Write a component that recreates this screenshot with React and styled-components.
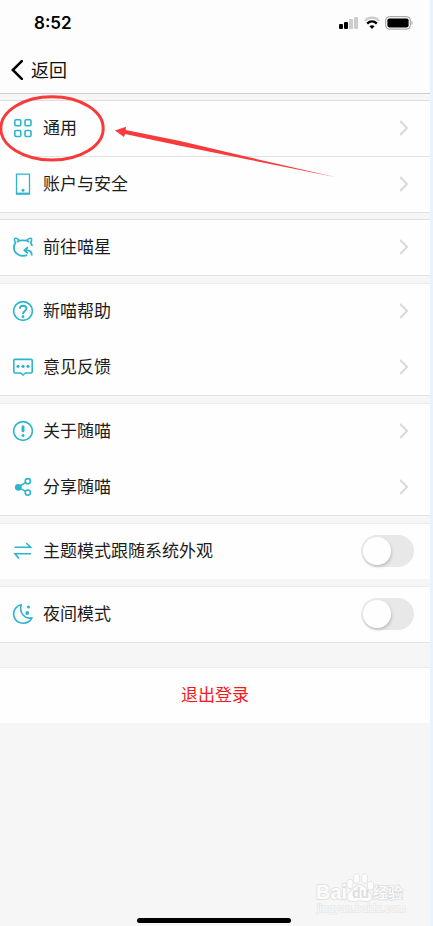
import React from 'react';
import styled, { createGlobalStyle } from 'styled-components';

const sans = '"Liberation Sans", "Noto Sans CJK SC", sans-serif';
const teal = '#2cb5cb';

const GlobalStyle = createGlobalStyle`
  *, *::before, *::after { box-sizing: border-box; }
  body { margin: 0; background: #f6f6f6; font-family: ${sans}; color: #1c1c1c; }
  button { font: inherit; color: inherit; border: 0; background: none; padding: 0; margin: 0; }
`;

const Screen = styled.div`
  position: relative;
  display: flex;
  flex-direction: column;
  min-height: 100vh;
  overflow: hidden;
  background: #f6f6f6;
  border-right: 3px solid #eaf2fd;
`;

const Header = styled.header`
  background: #fdfdfd;
  border-bottom: 1px solid #ccc;
`;

const StatusBar = styled.div`
  display: flex;
  align-items: center;
  justify-content: space-between;
  height: 46px;
  padding: 0 17px 0 34px;
`;

const Clock = styled.time`
  font: 600 17px/20px Inter, sans-serif;
  color: #000;
`;

const StatusIcons = styled.div`
  display: flex;
  align-items: center;
  gap: 5px;
`;

const NavBar = styled.nav`
  display: flex;
  align-items: center;
  height: 47px;
  padding: 0 11px;
`;

const BackButton = styled.button`
  display: flex;
  align-items: center;
  gap: 8px;
  font-size: 18px;
  line-height: 26px;
  color: #111;
  cursor: pointer;
`;

const BackText = styled.span`
  padding-top: 2px;
`;

const Main = styled.main`
  display: flex;
  flex-direction: column;
  padding-top: 6px;
`;

const Group = styled.section`
  background: #fefefe;
  border-top: 1px solid ${(p) => (p.$strong ? '#dedede' : '#ececec')};
  border-bottom: ${(p) => (p.$open ? '0' : '1px solid #e2e2e2')};
  margin-bottom: ${(p) => p.$gap || 7}px;
`;

const rowLayout = `
  display: flex;
  align-items: center;
  width: 100%;
  height: 55px;
  padding: 0 16px 1px 12px;
  gap: 9px;
  font-size: 17px;
  line-height: 24px;
  text-align: left;
`;

const RowButton = styled.button`
  ${rowLayout}
  && { padding: 0 21px 1px 12px; }
  cursor: pointer;
`;

const RowLabel = styled.label`
  ${rowLayout}
`;

const Divider = styled.hr`
  height: 1px;
  margin: 0 0 0 20px;
  border: 0;
  background: ${(p) => (p.$faint ? 'transparent' : '#e2e2e2')};
`;

const RowText = styled.span`
  flex: 1;
  padding-top: 2px;
`;

const IconSvg = styled.svg`
  flex: none;
  width: 22px;
  height: 22px;
  fill: none;
  stroke: ${teal};
  stroke-width: 1.6;
  overflow: visible;
`;

const Switch = styled.input`
  appearance: none;
  display: flex;
  align-items: center;
  flex: none;
  width: 53px;
  height: 32px;
  margin: 0;
  padding: 0 2px;
  border-radius: 16px;
  background: #e8e8e8;
  cursor: pointer;

  &::before {
    content: '';
    width: 28px;
    height: 28px;
    border-radius: 50%;
    background: #fefefe;
    box-shadow: 1px 2px 3px rgba(0, 0, 0, 0.16);
  }
  &:checked { background: ${teal}; justify-content: flex-end; }
`;

const LogoutPanel = styled.section`
  margin-top: 17px;
  background: #fefefe;
  border-top: 1px solid #ececec;
`;

const LogoutButton = styled.button`
  display: block;
  width: 100%;
  height: 55px;
  && { color: #f5191d; }
  font-size: 17px;
  line-height: 24px;
  cursor: pointer;
`;

const Footer = styled.footer`
  display: flex;
  justify-content: center;
  margin-top: auto;
  padding: 0 2px 3px 0;
`;

const HomeIndicator = styled.div`
  width: 154px;
  height: 5px;
  border-radius: 3px;
  background: #000;
`;

const Annotation = styled.svg`
  position: absolute;
  top: 0;
  left: 0;
  width: 345px;
  height: 190px;
  pointer-events: none;
`;

const Watermark = styled.svg`
  position: absolute;
  right: 20px;
  bottom: 8px;
  width: 100px;
  height: 48px;
  pointer-events: none;
`;

const icons = {
  grid: (
    <g>
      <rect x="2.8" y="2.8" width="6" height="6" rx="1.2" />
      <rect x="13" y="2.8" width="6" height="6" rx="1.2" />
      <rect x="2.8" y="13.5" width="6" height="6" rx="1.2" />
      <rect x="13" y="13.5" width="6" height="6" rx="1.2" />
    </g>
  ),
  phone: (
    <g>
      <path d="M4.5 1.2H17.5V20.8H4.5Z" strokeWidth="1.3" />
      <path d="M4 20.6H18" strokeWidth="2" />
      <circle cx="11" cy="17.3" r="1.5" fill={teal} stroke="none" />
    </g>
  ),
  cat: (
    <g>
      <path d="M15.2 19.2C8.500 21.6 1.900 17.600 1.900 11.800C1.900 9.500 2.600 7.800 3.800 6.300M6.800 4.600C9.500 4.200 12.500 4.200 15.200 4.600M18.300 6.300C19.300 7.500 19.900 8.700 20 10" strokeWidth="1.8" />
      <path d="M3.600 6.800C2.200 4.600 2 2.700 3.300 2.300C4.700 2 6.200 3 7.200 4.500L5 6M18.500 6.800C19.900 4.600 20.100 2.700 18.800 2.300C17.400 2 15.900 3 14.900 4.500L17 6" strokeWidth="1.6" strokeLinejoin="round" />
      <path d="M15.900 11.300L12.400 14.300L15.900 17.400M12.800 14.300H15.200C18.200 14.300 19.800 16 19.800 19.400" strokeWidth="1.8" />
    </g>
  ),
  help: (
    <g>
      <circle cx="11" cy="11" r="9.4" />
      <path d="M7.8 8.8C7.8 6.7 9.2 5.7 11.1 5.7C13 5.7 14.4 6.9 14.4 8.6C14.4 10.8 11 11.2 11 14" strokeWidth="1.9" />
      <circle cx="11" cy="16.7" r="1.4" fill={teal} stroke="none" />
    </g>
  ),
  feedback: (
    <g>
      <path d="M3 3.4H19C19.8 3.4 20.2 3.8 20.2 4.6V15.8C20.2 16.6 19.8 17 19 17H13.4L11 19L8.6 17H3C2.2 17 1.8 16.6 1.8 15.8V4.6C1.8 3.8 2.2 3.4 3 3.4Z" />
      <g fill={teal} stroke="none">
        <circle cx="6" cy="10.3" r="1.6" />
        <circle cx="11" cy="10.3" r="1.6" />
        <circle cx="16" cy="10.3" r="1.6" />
      </g>
    </g>
  ),
  about: (
    <g>
      <circle cx="11" cy="11" r="9.4" />
      <path d="M11 6.8V10.8" strokeWidth="3" strokeLinecap="round" />
      <circle cx="11" cy="15.6" r="1.5" fill={teal} stroke="none" />
    </g>
  ),
  share: (
    <g>
      <path d="M6.4 11L14 6.4M6.4 11.6L14 15.4" />
      <circle cx="6.3" cy="11.3" r="3.4" fill={teal} stroke="none" />
      <circle cx="15.8" cy="5.2" r="2.6" />
      <circle cx="15.8" cy="16.6" r="2.6" />
    </g>
  ),
  swap: (
    <g>
      <path d="M2.5 7.3H18.6L14.3 3M19 13.8H3L7 18.4" />
    </g>
  ),
  moon: (
    <g>
      <path d="M9.2 1.8C4.8 2.7 1.6 6.5 1.6 11.1C1.6 16.3 5.7 20.3 10.8 20.3C14.9 20.3 18.4 18.1 20 14.7C13.4 16.8 6.8 10.4 9.2 1.8Z" strokeLinejoin="round" />
      <circle cx="16.5" cy="4" r="1.5" fill={teal} stroke="none" />
      <circle cx="15.2" cy="10" r="1.9" fill={teal} stroke="none" />
    </g>
  ),
};

const Icon = ({ name }) => (
  <IconSvg viewBox="0 0 22 22" aria-hidden="true">{icons[name]}</IconSvg>
);

const Chevron = () => (
  <svg width="10" height="18" viewBox="0 0 10 18" fill="none" aria-hidden="true">
    <path d="M1.2 2L8 9L1.2 16" stroke="#d9d9d9" strokeWidth="2" />
  </svg>
);

const LinkRow = ({ icon, children }) => (
  <RowButton type="button">
    <Icon name={icon} />
    <RowText>{children}</RowText>
    <Chevron />
  </RowButton>
);

const SwitchRow = ({ icon, id, children }) => (
  <RowLabel htmlFor={id}>
    <Icon name={icon} />
    <RowText>{children}</RowText>
    <Switch type="checkbox" role="switch" id={id} />
  </RowLabel>
);

const Signal = () => (
  <svg width="20" height="14" viewBox="0 0 20 14" aria-hidden="true">
    <rect x="0" y="8" width="4" height="5" rx="1" />
    <rect x="5" y="6" width="4" height="7" rx="1" />
    <rect x="10" y="3" width="4" height="10" rx="1" fill="#ccc" />
    <rect x="15" y="1" width="4" height="12" rx="1" fill="#ccc" />
  </svg>
);

const Wifi = () => (
  <svg width="16" height="14" viewBox="0 0 16 14" fill="none" aria-hidden="true">
    <path d="M0.8 4.8C4.8 0.6 11.2 0.6 15.2 4.8" stroke="#ccc" strokeWidth="2.3" />
    <path d="M3.2 7.6C6 4.8 10 4.8 12.8 7.6" stroke="#000" strokeWidth="2.3" />
    <path d="M5.4 10.2C7 8.8 9 8.8 10.6 10.2L8 13Z" fill="#000" />
  </svg>
);

const Battery = () => (
  <svg width="28" height="14" viewBox="0 0 28 14" aria-hidden="true">
    <rect x="0.7" y="0.7" width="24.6" height="12.4" rx="3.4" fill="none" stroke="#999" />
    <rect x="2.4" y="2.4" width="21.2" height="9" rx="1.8" />
    <path d="M26.6 5C27.8 5.6 27.8 8.4 26.6 9Z" fill="#888" />
  </svg>
);

export default function App() {
  return (
    <Screen>
      <GlobalStyle />
      <Header>
        <StatusBar>
          <Clock>8:52</Clock>
          <StatusIcons>
            <Signal />
            <Wifi />
            <Battery />
          </StatusIcons>
        </StatusBar>
        <NavBar>
          <BackButton type="button">
            <svg width="12" height="20" viewBox="0 0 12 20" fill="none" aria-hidden="true">
              <path d="M10.8 1.2L1.8 10L10.8 18.8" stroke="#000" strokeWidth="2.5" strokeLinecap="round" />
            </svg>
            <BackText>返回</BackText>
          </BackButton>
        </NavBar>
      </Header>

      <Main>
        <Group $strong $gap={6}>
          <LinkRow icon="grid">通用</LinkRow>
          <Divider />
          <LinkRow icon="phone">账户与安全</LinkRow>
        </Group>
        <Group $strong>
          <LinkRow icon="cat">前往喵星</LinkRow>
        </Group>
        <Group>
          <LinkRow icon="help">新喵帮助</LinkRow>
          <Divider $faint />
          <LinkRow icon="feedback">意见反馈</LinkRow>
        </Group>
        <Group>
          <LinkRow icon="about">关于随喵</LinkRow>
          <Divider $faint />
          <LinkRow icon="share">分享随喵</LinkRow>
        </Group>
        <Group $open>
          <SwitchRow icon="swap" id="follow-system">主题模式跟随系统外观</SwitchRow>
        </Group>
        <Group>
          <SwitchRow icon="moon" id="night-mode">夜间模式</SwitchRow>
        </Group>
        <LogoutPanel>
          <LogoutButton type="button">退出登录</LogoutButton>
        </LogoutPanel>
      </Main>

      <Footer>
        <HomeIndicator />
      </Footer>

      <Watermark viewBox="0 0 100 48">
        <g fill="#fcfcfc" stroke="#dedede" strokeWidth="1.6" paintOrder="stroke" fontFamily={sans}>
          <text x="6" y="29" fontSize="20" fontWeight="700">Bai</text>
          <ellipse cx="40" cy="14" rx="2.8" ry="4.2" />
          <ellipse cx="46.5" cy="8.5" rx="2.8" ry="4.4" />
          <ellipse cx="54.5" cy="8.5" rx="2.8" ry="4.4" />
          <ellipse cx="60.500" cy="15.5" rx="2.8" ry="4" />
          <path d="M50 15C54 15 56 19 59 22C64 27 61 32 55 31C51 30.200 48 30.200 44 31C38 32 35 27 40 22C44 19 46 15 50 15Z" />
          <text x="42" y="28" fontSize="14" fontWeight="700" fill="#dedede" stroke="none">du</text>
          <text x="63" y="28" fontSize="15" fontWeight="500">经验</text>
        </g>
        <text x="7" y="42" fontSize="11" fontFamily={sans} fill="#fafafa" stroke="#e8e8e8" strokeWidth="1.4" paintOrder="stroke">jingyan.baidu.com</text>
      </Watermark>

      <Annotation viewBox="0 0 345 190" aria-hidden="true">
        <ellipse cx="52" cy="128.400" rx="51.200" ry="31.600" fill="none" stroke="#f93a3a" strokeWidth="3" />
        <path d="M115 130.500L126 126.800L125.600 130L180 141L250 157.500L336 177.200L248 159.500L179 145.500L125 134L124 137Z" fill="#f93a3a" />
      </Annotation>
    </Screen>
  );
}
